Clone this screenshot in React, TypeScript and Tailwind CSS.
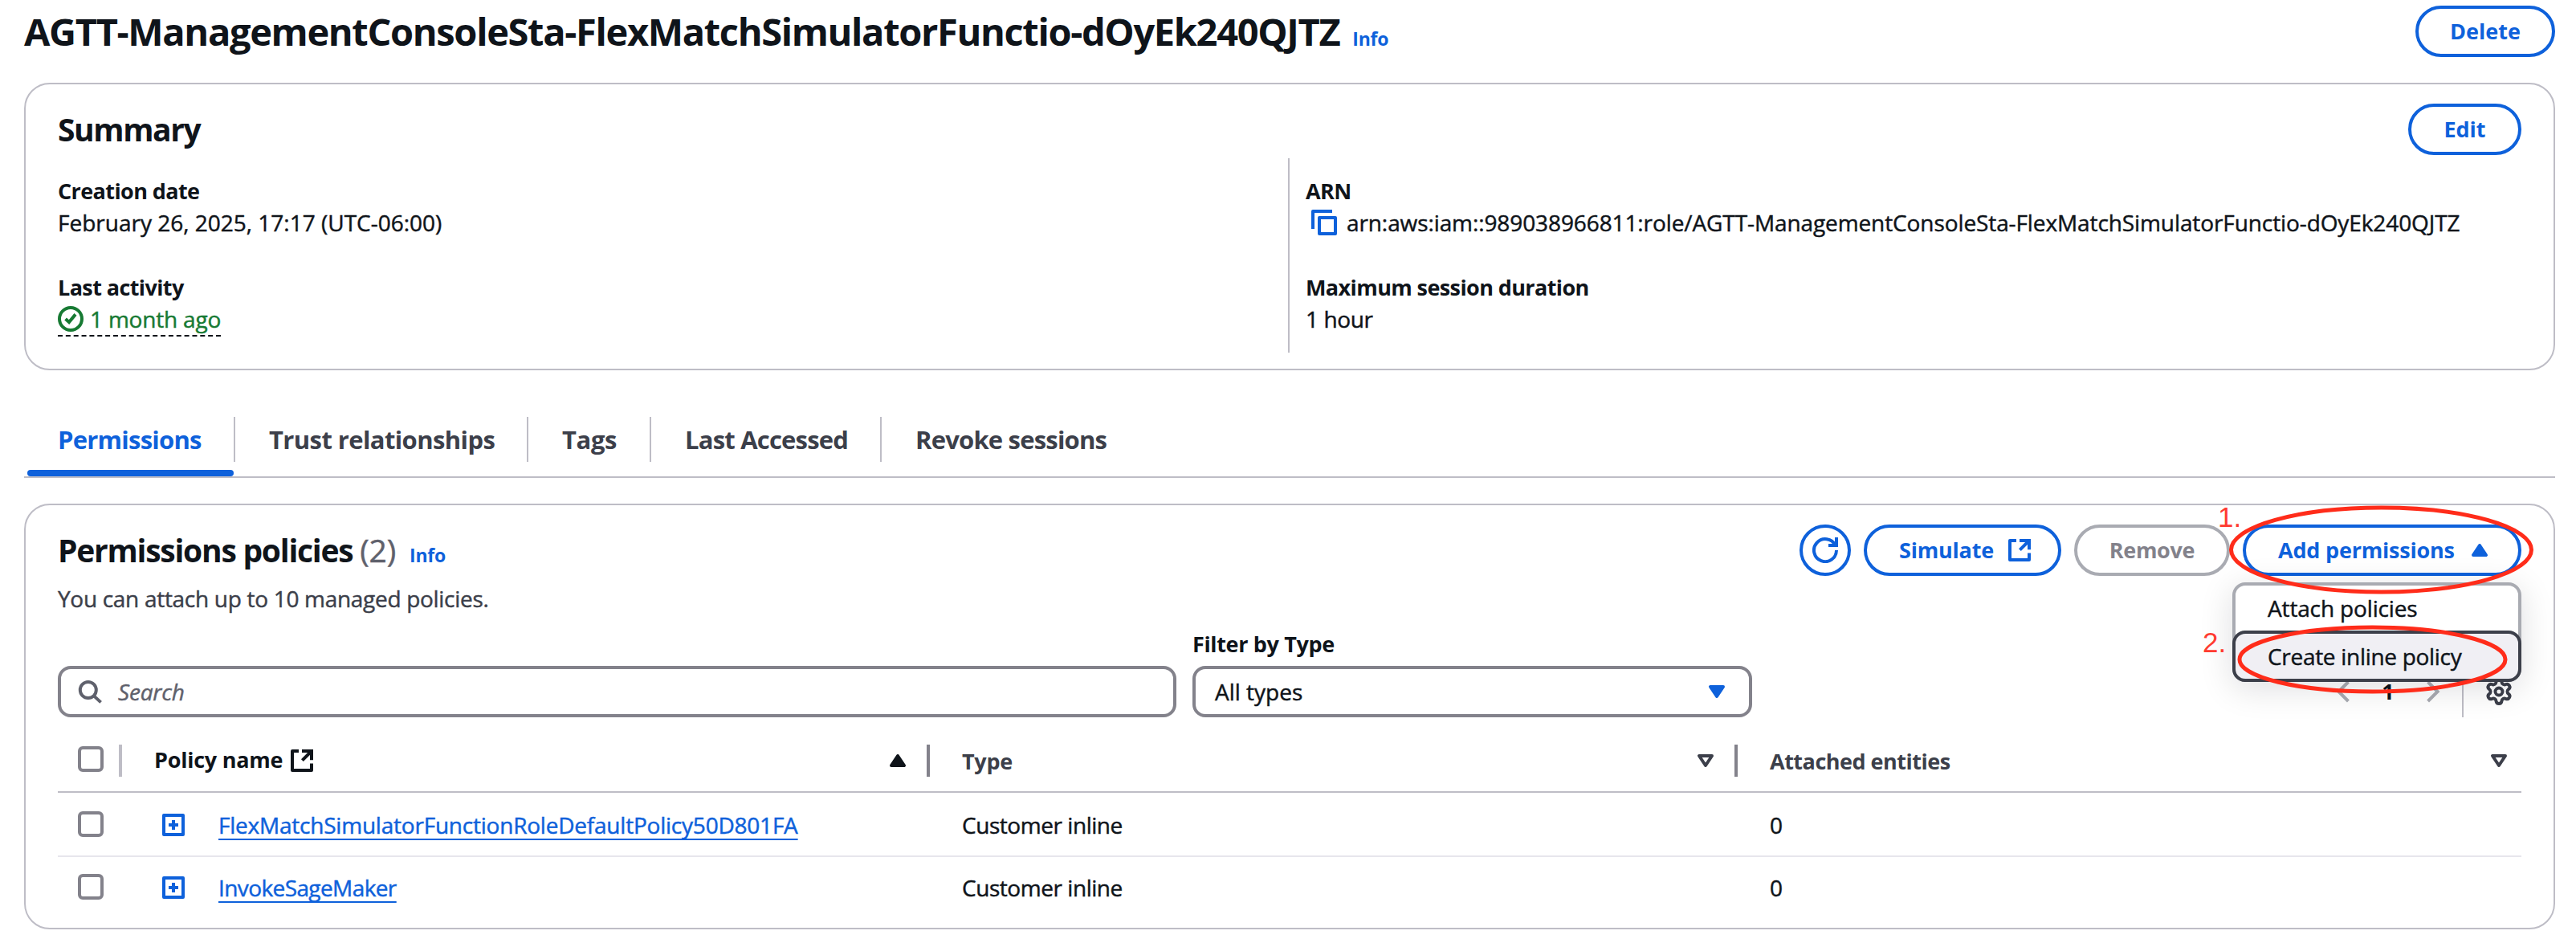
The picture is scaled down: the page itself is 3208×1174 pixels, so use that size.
import React from "react";
import { Settings } from "lucide-react";

type IconProps = { className?: string; children: React.ReactNode };

const Icon = ({ className = "", children }: IconProps) => (
  <svg
    className={`w-8 h-8 shrink-0 ${className}`}
    viewBox="0 0 16 16"
    fill="none"
    stroke="currentColor"
    strokeWidth="2"
    strokeLinejoin="round"
  >
    {children}
  </svg>
);

const ExternalIcon = ({ className }: { className?: string }) => (
  <Icon className={className}>
    <path d="M14 9.8V14H2V2h4" />
    <path strokeLinejoin="miter" d="M8 2h6v5.6" />
    <path d="M8.2 7.8 14 2" />
  </Icon>
);

const CaretUp = ({ className }: { className?: string }) => (
  <Icon className={className}>
    <path fill="currentColor" d="M4 11l4-6 4 6z" />
  </Icon>
);

const CaretDown = ({ className, filled }: { className?: string; filled?: boolean }) => (
  <Icon className={className}>
    <path fill={filled ? "currentColor" : "none"} d="M4 5h8l-4 6z" />
  </Icon>
);

const Checkbox = () => (
  <span className="block w-8 h-8 shrink-0 rounded-md border-4 border-[#83828b] bg-white" />
);

const Info = ({ className = "" }: { className?: string }) => (
  <a className={`text-[23px] font-bold tracking-[-0.2px] text-[#0e61db] ${className}`}>Info</a>
);

const tabs = [
  { label: "Permissions", width: "w-[263px] border-r-2", tracking: "tracking-[-0.75px]", active: true },
  { label: "Trust relationships", width: "w-[365px] border-r-2", tracking: "tracking-[-0.6px]" },
  { label: "Tags", width: "w-[153px] border-r-2", tracking: "tracking-[-0.4px]" },
  { label: "Last Accessed", width: "w-[287px] border-r-2", tracking: "tracking-[-0.8px]" },
  { label: "Revoke sessions", width: "w-[300px]", tracking: "tracking-[-0.8px]" },
];

const policies = [
  {
    name: "FlexMatchSimulatorFunctionRoleDefaultPolicy50D801FA",
    tracking: "tracking-[-0.22px]",
    type: "Customer inline",
    entities: 0,
  },
  { name: "InvokeSageMaker", tracking: "tracking-[-0.6px]", type: "Customer inline", entities: 0 },
];

// Open Sans has no weight between 400 and 600, so body copy gets a hairline stroke
const body = "[-webkit-text-stroke:0.45px_currentColor]";

const buttonBase = "flex h-16 items-center rounded-full border-4 text-[27px] font-bold";

const Header = () => (
  <header className="flex h-[103px] items-start justify-between pt-[7px]">
    <h1 className="mt-[2px] whitespace-nowrap text-[47px] leading-[60px] font-bold tracking-[-1.34px]">
      AGTT-ManagementConsoleSta-FlexMatchSimulatorFunctio-dOyEk240QJTZ
      <Info className="ml-4" />
    </h1>
    <button className={`${buttonBase} w-[174px] justify-center border-[#0e61db] text-[#0e61db]`}>
      Delete
    </button>
  </header>
);

const Label = ({ children }: { children: React.ReactNode }) => (
  <dt className="pt-px text-[27px] leading-[39px] font-bold tracking-[-0.6px]">{children}</dt>
);

const Summary = () => (
  <section className="h-[358px] rounded-[32px] border-2 border-[#bebdc6] px-10 pt-6">
    <div className="flex h-16 items-center justify-between">
      <h2 className="text-[39px] font-bold tracking-[-1.4px]">Summary</h2>
      <button className={`${buttonBase} w-[141px] justify-center border-[#0e61db] text-[#0e61db]`}>
        Edit
      </button>
    </div>
    <div className="mt-1 flex h-[242px]">
      <dl className="w-[1532px] pt-5">
        <Label>Creation date</Label>
        <dd className={`${body} leading-10`}>February 26, 2025, 17:17 (UTC-06:00)</dd>
        <div className="h-10" />
        <Label>Last activity</Label>
        <dd className="inline-flex h-[42px] items-center gap-2 border-b-2 border-dashed border-[#0f141a] text-[#177a33]">
          <Icon>
            <circle cx="8" cy="8" r="7" />
            <path strokeLinejoin="miter" d="M4.8 8 7 10l4-4.8" />
          </Icon>
          <span className={`${body} leading-10 tracking-[-0.2px]`}>1 month ago</span>
        </dd>
      </dl>
      <dl className="flex-1 border-l-2 border-[#bebdc6] pt-5 pl-5">
        <Label>ARN</Label>
        <dd className="flex h-10 items-center">
          <Icon className="ml-[7px] mr-3 text-[#0e61db]">
            <path d="M13 1H1v11" />
            <path d="M5 5h10v10H5z" />
          </Icon>
          <span className={`${body} whitespace-nowrap tracking-[-0.1px]`}>
            arn:aws:iam::989038966811:role/AGTT-ManagementConsoleSta-FlexMatchSimulatorFunctio-dOyEk240QJTZ
          </span>
        </dd>
        <div className="h-10" />
        <Label>Maximum session duration</Label>
        <dd className={`${body} leading-10 tracking-[-0.4px]`}>1 hour</dd>
      </dl>
    </div>
  </section>
);

const Tabs = () => (
  <nav className="relative mt-[58px] flex h-[76px] border-b-2 border-[#bebdc6]">
    {tabs.map((tab) => (
      <div
        key={tab.label}
        className={`flex h-14 items-center border-[#bebdc6] pl-[42px] text-[31px] font-bold whitespace-nowrap ${tab.width} ${tab.tracking} ${
          tab.active ? "text-[#0e61db]" : "text-[#3c3f4a]"
        }`}
      >
        {tab.label}
      </div>
    ))}
    <span className="absolute bottom-0 left-1 h-2 w-[257px] rounded-[4px] bg-[#0e61db]" />
  </nav>
);

const AddPermissions = () => (
  <div className="relative">
    <button
      className={`${buttonBase} w-[347px] justify-between border-[#0e61db] pr-8 pl-10 tracking-[-0.2px] text-[#0e61db]`}
    >
      Add permissions
      <CaretUp />
    </button>

    {/* Open menu */}
    <div
      className={`${body} absolute top-[72px] right-0 z-10 h-[124px] w-[360px] rounded-2xl border-4 border-[#a9abb2] bg-white shadow-[0_8px_40px_2px_rgba(0,7,22,0.12)]`}
    >
      <div className="flex h-14 items-center pl-10 tracking-[-0.15px]">Attach policies</div>
      <div className="-mx-1 flex h-16 items-center rounded-2xl border-4 border-[#3c3f4a] bg-[#f0eff4] pl-10 tracking-[-0.3px]">
        Create inline policy
      </div>
    </div>

    {/* Step markers */}
    <svg className="absolute top-[-25px] left-[-19px] z-20 h-[240px] w-[386px]" fill="none" stroke="#ff2c1a" strokeWidth="5">
      <ellipse cx="191.5" cy="56.5" rx="187" ry="52.5" />
      <ellipse cx="180.5" cy="193" rx="165.5" ry="40" />
    </svg>
    <span className="absolute top-[-27px] left-[-31px] z-20 font-['Liberation_Sans',sans-serif] text-[35px] leading-none text-[#ff3b30]">
      1.
    </span>
    <span className="absolute top-[129px] left-[-50px] z-20 font-['Liberation_Sans',sans-serif] text-[35px] leading-none text-[#ff3b30]">
      2.
    </span>
  </div>
);

const Filters = () => (
  <div className="mt-4 flex h-28 items-end">
    <div className="flex h-16 w-[1393px] items-center rounded-2xl border-4 border-[#83828b] pl-5 text-[#5f616c]">
      <Icon>
        <circle cx="6.9" cy="7" r="5" />
        <path d="m10.6 10.8 4.2 3.9" />
      </Icon>
      <span className={`${body} ml-[19px] tracking-[-0.2px] italic`}>Search</span>
    </div>
    <div className="ml-5 w-[697px]">
      <label className="mb-2 block pt-px text-[27px] leading-[39px] font-bold tracking-[-0.35px]">Filter by Type</label>
      <div
        className={`${body} flex h-16 items-center justify-between rounded-2xl border-4 border-[#83828b] px-6`}
      >
        All types
        <CaretDown filled className="text-[#0e61db]" />
      </div>
    </div>
    <div className="ml-auto flex h-16 items-center pr-[10px]">
      <Icon className="text-[#a9abb2]">
        <path strokeLinejoin="miter" d="m11.2 2-6 6 6 6" />
      </Icon>
      <span className="w-20 text-center text-[27px] font-bold">1</span>
      <Icon className="text-[#a9abb2]">
        <path strokeLinejoin="miter" d="m4.8 2 6 6-6 6" />
      </Icon>
      <span className="ml-5 h-16 w-[2px] bg-[#bebdc6]" />
      <Settings className="ml-[26px] h-9 w-9 text-[#3c3f4a]" strokeWidth={2.6} />
    </div>
  </div>
);

const columns = "grid grid-cols-[80px_1006px_1006px_976px]";

const PolicyTable = () => (
  <div>
    <div className={`${columns} h-[94px] border-b-2 border-[#bebdc6] pt-[34px] text-[27px] font-bold`}>
      <div className="flex h-10 items-start border-r-4 border-[#bebdc6] pt-[2px] pl-[25px]">
        <Checkbox />
      </div>
      <div className="flex h-10 items-center border-r-4 border-[#83828b] pr-5 pl-10">
        <span className="pb-[3px] tracking-[-0.25px]">Policy name</span>
        <ExternalIcon className="ml-2" />
        <CaretUp className="ml-auto" />
      </div>
      <div className="flex h-10 items-center justify-between border-r-4 border-[#83828b] pr-5 pl-10 text-[#3c3f4a]">
        <span className="pt-px tracking-[-0.3px]">Type</span>
        <CaretDown />
      </div>
      <div className="flex h-10 items-center justify-between pr-3 pl-10 text-[#3c3f4a]">
        <span className="pt-px tracking-[-0.5px]">Attached entities</span>
        <CaretDown />
      </div>
    </div>
    {policies.map((policy) => (
      <div
        key={policy.name}
        className={`${columns} ${body} h-20 items-center border-b-2 border-[#e7e6ec] last:h-[74px] last:border-b-0`}
      >
        <div className="pl-[25px]">
          <Checkbox />
        </div>
        <div className="flex items-center pl-12">
          <Icon className="mt-[2px] text-[#0e61db]">
            <path d="M2 2h12v12H2z" />
            <path d="M8 5v6M5 8h6" />
          </Icon>
          <a
            className={`mt-[2px] ml-10 text-[#0e61db] underline decoration-2 underline-offset-[6px] [text-decoration-skip-ink:none] ${policy.tracking}`}
          >
            {policy.name}
          </a>
        </div>
        <div className="mt-[2px] pl-10 tracking-[-0.45px]">{policy.type}</div>
        <div className="mt-[2px] pl-10">{policy.entities}</div>
      </div>
    ))}
  </div>
);

const Policies = () => (
  <section className="mt-8 h-[530px] rounded-[32px] border-2 border-[#bebdc6] px-10 pt-6">
    <div className="flex h-16 items-center justify-between">
      <h2 className="pt-[5px] text-[39px] font-bold tracking-[-1.25px]">
        Permissions policies <span className={`${body} font-normal tracking-[-0.2px] text-[#5f616c]`}>(2)</span>
        <Info className="ml-[17px]" />
      </h2>
      <div className="flex gap-4">
        <button className={`${buttonBase} w-16 justify-center border-[#0e61db] text-[#0e61db]`}>
          <Icon>
            <path strokeLinejoin="miter" d="M10 5h5V0" />
            <path d="M15 8a7 7 0 1 1-.7-3" />
          </Icon>
        </button>
        <button
          className={`${buttonBase} w-[246px] justify-between border-[#0e61db] pr-8 pl-10 tracking-[-0.2px] text-[#0e61db]`}
        >
          Simulate
          <ExternalIcon />
        </button>
        <button className={`${buttonBase} w-[194px] justify-center border-[#a9abb2] tracking-[-0.3px] text-[#83828b]`}>
          Remove
        </button>
        <AddPermissions />
      </div>
    </div>
    <p className={`${body} mt-2 leading-10 tracking-[-0.3px] text-[#3c3f4a]`}>
      You can attach up to 10 managed policies.
    </p>
    <Filters />
    <PolicyTable />
  </section>
);

const App = () => {
  return (
    <main className="h-[1174px] w-[3208px] overflow-hidden bg-white pr-[26px] pl-[30px] font-['Open_Sans','Noto_Sans',sans-serif] text-[28px] leading-10 text-[#0f141a]">
      <Header />
      <Summary />
      <Tabs />
      <Policies />
    </main>
  );
};

export default App;
